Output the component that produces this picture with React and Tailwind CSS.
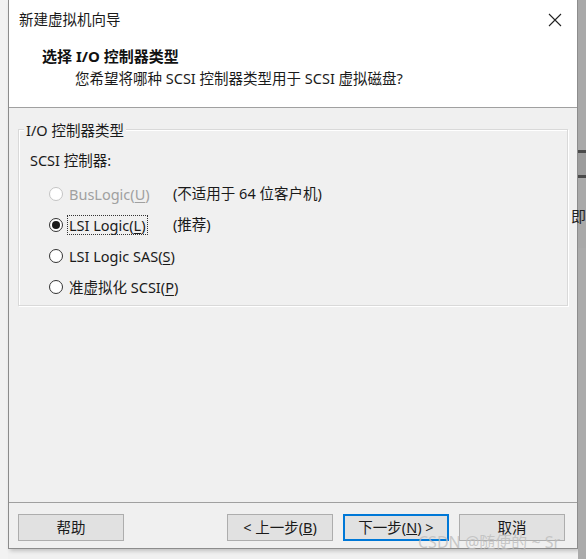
import React from "react";

const font = { fontFamily: '"Noto Sans", "Noto Sans CJK SC", sans-serif' };

const Radio = ({ checked, disabled }) => (
  <span
    className={`shrink-0 flex items-center justify-center w-[14px] h-[14px] rounded-full border bg-white ${
      disabled ? "border-[#c4c4c4]" : "border-[#333333]"
    }`}
  >
    {checked && <span className="w-[8px] h-[8px] rounded-full bg-[#1a1a1a]" />}
  </span>
);

const Option = ({ label, hot, note, checked, disabled, focused }) => (
  <div className="flex items-center h-[31px]">
    <div className="w-[124px] shrink-0 flex items-center">
      <Radio checked={checked} disabled={disabled} />
      <span
        className={`ml-[5px] leading-[18px] px-[1px] whitespace-nowrap ${
          focused ? "outline outline-1 outline-dotted outline-[#333]" : ""
        } ${disabled ? "text-[#a0a0a0]" : "text-[#1a1a1a]"}`}
      >
        {label}(<span className="underline underline-offset-2">{hot}</span>)
      </span>
    </div>
    {note && <span className="text-[#1a1a1a] whitespace-nowrap">{note}</span>}
  </div>
);

const Button = ({ children, primary }) => (
  <button
    className={`h-[27px] w-[106px] bg-[#e1e1e1] text-[14.5px] text-[#1a1a1a] ${
      primary ? "border-2 border-[#0078d7]" : "border border-[#adadad]"
    }`}
  >
    {children}
  </button>
);

export default function App() {
  return (
    <div className="relative w-[586px] h-[559px] bg-[#f0f0f0] overflow-hidden flex" style={font}>
      <div className="w-[8px] bg-[#f2f2f2]" />
      <div className="w-[570px] h-[549px] border border-t-0 border-[#8c8c8c] flex flex-col bg-[#f0f0f0] shadow-[2px_2px_4px_rgba(0,0,0,0.2)]">
        <div className="h-[108px] bg-white border-b border-[#a0a0a0]">
          <div className="flex items-center justify-between h-[40px] pl-[10px] pr-[15px]">
            <span className="text-[14.5px] text-[#1a1a1a]">新建虚拟机向导</span>
            <svg width="14" height="14" viewBox="0 0 14 14">
              <path d="M1 1L13 13M13 1L1 13" stroke="#222" strokeWidth="1.1" />
            </svg>
          </div>
          <div className="pl-[33px] mt-[6px] text-[15px] font-bold text-[#111] leading-[20px]">
            选择 I/O 控制器类型
          </div>
          <div className="pl-[66px] mt-[2px] text-[14.5px] text-[#1a1a1a] leading-[20px]">
            您希望将哪种 SCSI 控制器类型用于 SCSI 虚拟磁盘?
          </div>
        </div>
        <div className="flex-1 px-[9px] pt-[21px]">
          <div className="relative h-[177px] border border-[#d9d9d9] shadow-[inset_1px_1px_0_#fff,1px_1px_0_#fff]">
            <span className="absolute -top-[10px] left-[5px] px-[2px] bg-[#f0f0f0] text-[14.5px] text-[#1a1a1a] leading-[20px]">
              I/O 控制器类型
            </span>
            <div className="pl-[11px] pt-[20px] text-[14.5px] text-[#1a1a1a] leading-[20px]">SCSI 控制器:</div>
            <div className="pl-[30px] pt-[8px] text-[14.5px]">
              <Option label="BusLogic" hot="U" disabled note="(不适用于 64 位客户机)" />
              <Option label="LSI Logic" hot="L" checked focused note="(推荐)" />
              <Option label="LSI Logic SAS" hot="S" />
              <Option label="准虚拟化 SCSI" hot="P" />
            </div>
          </div>
        </div>
        <div className="h-[46px] border-t border-[#a0a0a0] flex items-start pt-[11px] pl-[9px] pr-[12px]">
          <Button>帮助</Button>
          <div className="flex-1" />
          <div className="flex gap-[10px]">
            <Button>&lt; 上一步(<span className="underline">B</span>)</Button>
            <Button primary>下一步(<span className="underline">N</span>) &gt;</Button>
            <Button>取消</Button>
          </div>
        </div>
      </div>
      <div className="flex-1 bg-[#a9a9a9] flex flex-col">
        <div className="h-[150px]" />
        <div className="h-[3px] bg-[#4a4a4a]" />
        <div className="h-[22px] bg-[#9c9c9c]" />
        <div className="h-[3px] bg-[#4a4a4a]" />
        <div className="h-[70px] text-[15px] text-[#222] -ml-[7px] pt-[28px] leading-[20px]">即</div>
        <div className="flex-1 bg-[#ababab]" />
      </div>
      <span className="absolute left-[418px] top-[532px] text-[16px] text-[#bdbdbd]/80 leading-[20px]">
        CSDN @随便的 ~ Sr
      </span>
    </div>
  );
}
